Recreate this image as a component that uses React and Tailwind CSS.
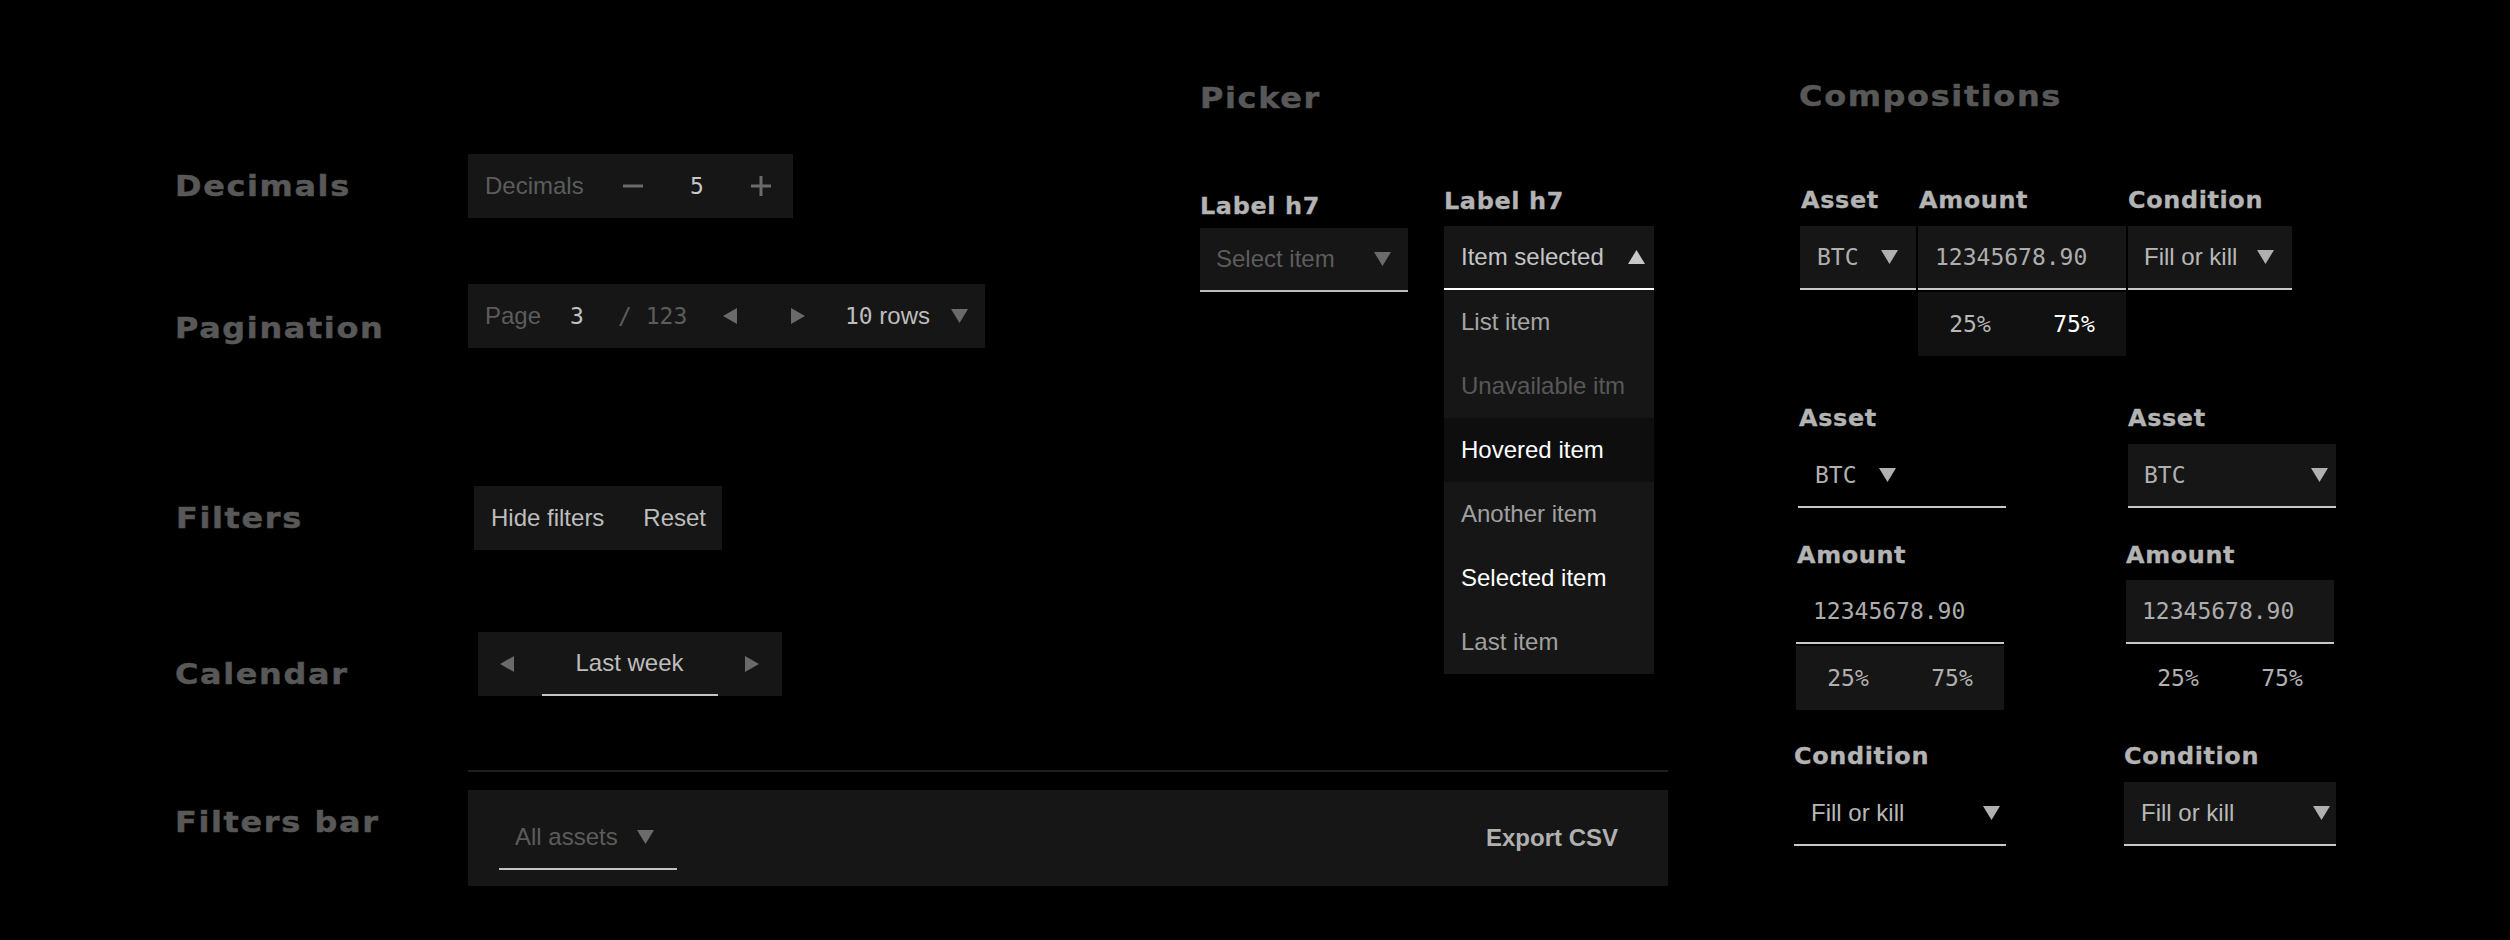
import React from "react";

const H = "font-['DejaVu_Sans',sans-serif] font-bold text-[29px] tracking-[1.5px] origin-left scale-x-[1.1] [-webkit-text-stroke:0.5px_#585858] text-[#585858] whitespace-nowrap";
const L = "font-['DejaVu_Sans',sans-serif] font-bold text-[23px] tracking-[0.6px] origin-left scale-x-[1.04] [-webkit-text-stroke:0.3px_#b3b3b3] text-[#b3b3b3] h-[32px] leading-[32px] whitespace-nowrap";
const M = "font-['DejaVu_Sans_Mono',monospace] text-[23px]";
const BOX = "bg-[#161616]";

function TriDown({ className = "" }) {
  return (
    <svg width="17" height="14" viewBox="0 0 17 14" className={"shrink-0 " + className}>
      <polygon points="0,0 17,0 8.5,14" fill="currentColor" />
    </svg>
  );
}
function TriUp({ className = "" }) {
  return (
    <svg width="17" height="14" viewBox="0 0 17 14" className={"shrink-0 " + className}>
      <polygon points="8.5,0 17,14 0,14" fill="currentColor" />
    </svg>
  );
}
function TriLeft({ className = "" }) {
  return (
    <svg width="14" height="16" viewBox="0 0 14 16" className={"shrink-0 " + className}>
      <polygon points="14,0 14,16 0,8" fill="currentColor" />
    </svg>
  );
}
function TriRight({ className = "" }) {
  return (
    <svg width="14" height="16" viewBox="0 0 14 16" className={"shrink-0 " + className}>
      <polygon points="0,0 14,8 0,16" fill="currentColor" />
    </svg>
  );
}
function Minus() {
  return (
    <svg width="20" height="20" viewBox="0 0 20 20" className="text-[#6b6b6b]">
      <rect x="0" y="8.5" width="20" height="3" fill="currentColor" />
    </svg>
  );
}
function Plus() {
  return (
    <svg width="20" height="20" viewBox="0 0 20 20" className="text-[#6b6b6b]">
      <rect x="0" y="8.5" width="20" height="3" fill="currentColor" />
      <rect x="8.5" y="0" width="3" height="20" fill="currentColor" />
    </svg>
  );
}

export default function App() {
  const items = [
    { t: "List item", c: "text-[#a6a6a6]", bg: "" },
    { t: "Unavailable itm", c: "text-[#585858]", bg: "" },
    { t: "Hovered item", c: "text-white", bg: "bg-[#0e0e0e]" },
    { t: "Another item", c: "text-[#a0a0a0]", bg: "" },
    { t: "Selected item", c: "text-white", bg: "" },
    { t: "Last item", c: "text-[#a0a0a0]", bg: "" },
  ];

  return (
    <div className="w-[2510px] h-[940px] bg-black flex overflow-hidden font-['Liberation_Sans',Arial,sans-serif] text-[24px] text-[#bdbdbd]">
      {/* Left area */}
      <div className="w-[1668px] shrink-0 pl-[175px] flex flex-col">
        <div className="flex h-[706px]">
          {/* Controls column */}
          <div className="w-[1025px] shrink-0 flex flex-col pt-[154px]">
            {/* Decimals */}
            <div className="flex items-start">
              <div className="w-[293px] shrink-0">
                <div className={H + " h-[64px] leading-[64px]"}>Decimals</div>
              </div>
              <div className={BOX + " w-[325px] h-[64px] flex items-center pl-[17px]"}>
                <span className="w-[116px] text-[#5c5c5c]">Decimals</span>
                <span className="w-[64px] flex justify-center"><Minus /></span>
                <span className={M + " w-[64px] text-center text-[#c8c8c8]"}>5</span>
                <span className="w-[64px] flex justify-center"><Plus /></span>
              </div>
            </div>

            {/* Pagination */}
            <div className="flex items-start mt-[66px]">
              <div className="w-[293px] shrink-0 mt-[12px]">
                <div className={H + " h-[64px] leading-[64px]"}>Pagination</div>
              </div>
              <div className={BOX + " w-[517px] h-[64px] flex items-center px-[17px]"}>
                <span className="w-[68px] text-[#5c5c5c]">Page</span>
                <span className={M + " w-[48px] text-center text-[#c0c0c0]"}>3</span>
                <span className={M + " w-[101px] pl-[17px] text-[#5c5c5c] whitespace-nowrap"}>/ 123</span>
                <TriLeft className="ml-[21px] text-[#6a6a6a]" />
                <TriRight className="ml-[54px] text-[#6a6a6a]" />
                <span className="ml-[40px] whitespace-nowrap">
                  <span className={M}>10</span> rows
                </span>
                <TriDown className="ml-auto text-[#6a6a6a]" />
              </div>
            </div>

            {/* Filters */}
            <div className="flex items-start mt-[126px]">
              <div className="w-[293px] shrink-0 pl-[1px]">
                <div className={H + " h-[64px] leading-[64px]"}>Filters</div>
              </div>
              <div className={BOX + " ml-[6px] w-[248px] h-[64px] flex items-center justify-between pl-[17px] pr-[16px]"}>
                <span>Hide filters</span>
                <span>Reset</span>
              </div>
            </div>

            {/* Calendar */}
            <div className="flex items-start mt-[82px]">
              <div className="w-[293px] shrink-0 mt-[10px]">
                <div className={H + " h-[64px] leading-[64px]"}>Calendar</div>
              </div>
              <div className={BOX + " ml-[10px] w-[304px] h-[64px] flex items-stretch justify-between px-[22px]"}>
                <div className="flex items-center text-[#6a6a6a]"><TriLeft /></div>
                <div className="w-[176px] border-b-2 border-[#c4c4c4] flex items-center justify-center">Last week</div>
                <div className="flex items-center text-[#6a6a6a] pr-[1px]"><TriRight /></div>
              </div>
            </div>
          </div>

          {/* Picker column */}
          <div className="w-[454px] shrink-0 flex flex-col pt-[66px]">
            <div className={H + " h-[64px] leading-[64px]"}>Picker</div>
            <div className="flex items-start">
              <div className="mt-[60px] w-[208px] shrink-0">
                <div className={L}>Label h7</div>
                <div className={BOX + " mt-[6px] h-[64px] border-b-2 border-[#bdbdbd] flex items-center justify-between pl-[16px] pr-[17px]"}>
                  <span className="text-[#5c5c5c]">Select item</span>
                  <TriDown className="text-[#6b6b6b]" />
                </div>
              </div>
              <div className="ml-[36px] mt-[55px] w-[210px] shrink-0">
                <div className={L}>Label h7</div>
                <div className={BOX + " mt-[9px] h-[64px] border-b-2 border-white flex items-center justify-between pl-[17px] pr-[9px]"}>
                  <span className="text-[#c4c4c4]">Item selected</span>
                  <TriUp className="text-[#c8c8c8]" />
                </div>
                <div className={BOX + " flex flex-col"}>
                  {items.map((it) => (
                    <div key={it.t} className={"h-[64px] flex items-center pl-[17px] whitespace-nowrap " + it.c + " " + it.bg}>
                      {it.t}
                    </div>
                  ))}
                </div>
              </div>
            </div>
          </div>
        </div>

        {/* Divider */}
        <div className="mt-[64px] ml-[293px] w-[1200px] h-[2px] bg-[#1f1f1f]" />

        {/* Filters bar */}
        <div className="flex items-start mt-[18px]">
          <div className="w-[293px] shrink-0">
            <div className={H + " h-[64px] leading-[64px]"}>Filters bar</div>
          </div>
          <div className={BOX + " w-[1200px] h-[96px] flex items-start justify-between pt-[16px] pl-[31px] pr-[50px]"}>
            <div className="w-[178px] h-[64px] border-b-2 border-[#c4c4c4] flex items-center pl-[16px]">
              <span className="text-[#5c5c5c]">All assets</span>
              <TriDown className="ml-[19px] text-[#6b6b6b]" />
            </div>
            <div className="h-[64px] leading-[64px] font-bold text-[#b0b0b0]">Export CSV</div>
          </div>
        </div>
      </div>

      {/* Compositions */}
      <div className="ml-[130px] pt-[64px] flex flex-col shrink-0">
        <div className={H + " h-[64px] leading-[64px] pl-[1px]"}>Compositions</div>

        <div className="flex items-start mt-[56px] gap-[2px] ml-[2px]">
          <div className="w-[116px] flex flex-col">
            <div className={L + " pl-[1px]"}>Asset</div>
            <div className={BOX + " mt-[10px] h-[64px] border-b-2 border-[#c8c8c8] flex items-center justify-between pl-[17px] pr-[18px]"}>
              <span className={M + " text-[#b0b0b0]"}>BTC</span>
              <TriDown className="text-[#b0b0b0]" />
            </div>
          </div>
          <div className="w-[208px] flex flex-col">
            <div className={L + " pl-[1px]"}>Amount</div>
            <div className={BOX + " mt-[10px] h-[64px] border-b-2 border-[#c8c8c8] flex items-center pl-[17px]"}>
              <span className={M + " text-[#adadad]"}>12345678.90</span>
            </div>
            <div className={"mt-[2px] h-[64px] bg-[#111111] grid grid-cols-2 items-center " + M}>
              <span className="text-center text-[#b8b8b8]">25%</span>
              <span className="text-center text-white">75%</span>
            </div>
          </div>
          <div className="w-[164px] flex flex-col">
            <div className={L}>Condition</div>
            <div className={BOX + " mt-[10px] h-[64px] border-b-2 border-[#c8c8c8] flex items-center justify-between pl-[16px] pr-[18px]"}>
              <span className="text-[#b8b8b8] whitespace-nowrap">Fill or kill</span>
              <TriDown className="text-[#b0b0b0]" />
            </div>
          </div>
        </div>

        <div className="flex items-start mt-[46px]">
          {/* Left stacked form */}
          <div className="w-[208px] flex flex-col shrink-0">
            <div className={L + " pl-[1px]"}>Asset</div>
            <div className="mt-[10px] h-[64px] border-b-2 border-[#c8c8c8] flex items-center pl-[17px]">
              <span className={M + " text-[#b0b0b0]"}>BTC</span>
              <TriDown className="ml-[22px] text-[#b0b0b0]" />
            </div>
            <div className={L + " mt-[31px] -ml-[1px]"}>Amount</div>
            <div className="mt-[9px] -ml-[2px] w-[208px] h-[64px] border-b-2 border-[#c8c8c8] flex items-center pl-[17px]">
              <span className={M + " text-[#adadad]"}>12345678.90</span>
            </div>
            <div className={BOX + " mt-[2px] -ml-[2px] w-[208px] h-[64px] grid grid-cols-2 items-center " + M}>
              <span className="text-center text-[#b0b0b0]">25%</span>
              <span className="text-center text-[#b0b0b0]">75%</span>
            </div>
            <div className={L + " mt-[30px] -ml-[4px]"}>Condition</div>
            <div className="mt-[10px] -ml-[4px] w-[212px] h-[64px] border-b-2 border-[#c8c8c8] flex items-center justify-between pl-[17px] pr-[6px]">
              <span className="text-[#b8b8b8] whitespace-nowrap">Fill or kill</span>
              <TriDown className="text-[#b0b0b0]" />
            </div>
          </div>

          {/* Right stacked form */}
          <div className="ml-[122px] w-[208px] flex flex-col shrink-0">
            <div className={L}>Asset</div>
            <div className={BOX + " mt-[10px] h-[64px] border-b-2 border-[#c8c8c8] flex items-center justify-between pl-[16px] pr-[8px]"}>
              <span className={M + " text-[#b0b0b0]"}>BTC</span>
              <TriDown className="text-[#b0b0b0]" />
            </div>
            <div className={L + " mt-[31px] -ml-[2px]"}>Amount</div>
            <div className={BOX + " mt-[9px] -ml-[2px] w-[208px] h-[64px] border-b-2 border-[#c8c8c8] flex items-center pl-[16px]"}>
              <span className={M + " text-[#adadad]"}>12345678.90</span>
            </div>
            <div className={"mt-[2px] -ml-[2px] w-[208px] h-[64px] grid grid-cols-2 items-center " + M}>
              <span className="text-center text-[#b0b0b0]">25%</span>
              <span className="text-center text-[#b0b0b0]">75%</span>
            </div>
            <div className={L + " mt-[30px] -ml-[4px]"}>Condition</div>
            <div className={BOX + " mt-[10px] -ml-[4px] w-[212px] h-[64px] border-b-2 border-[#c8c8c8] flex items-center justify-between pl-[17px] pr-[6px]"}>
              <span className="text-[#b8b8b8] whitespace-nowrap">Fill or kill</span>
              <TriDown className="text-[#b0b0b0]" />
            </div>
          </div>
        </div>
      </div>
    </div>
  );
}
